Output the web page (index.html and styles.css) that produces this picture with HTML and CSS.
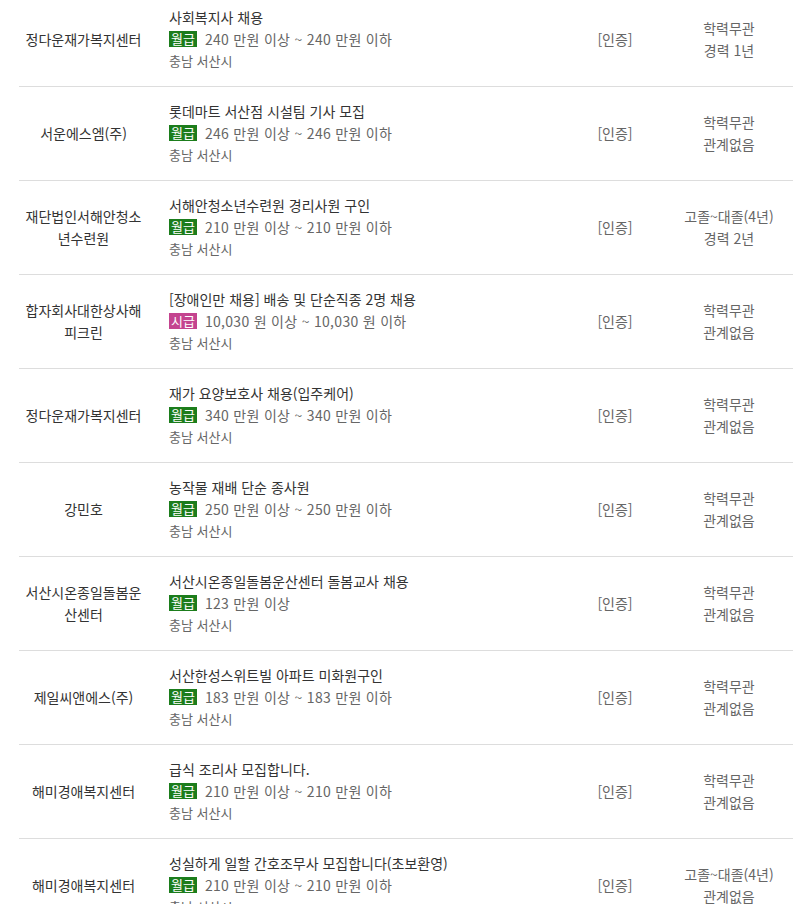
FILE: index.html
```html
<!DOCTYPE html>
<html lang="ko">
<head>
<meta charset="utf-8">
<link rel="stylesheet" href="styles.css">
</head>
<body>
<div class="list">
  <div class="row">
    <div class="company">정다운재가복지센터</div>
    <div class="info">
      <div class="title">사회복지사 채용</div>
      <div class="pay"><span class="badge monthly">월급</span>240 만원 이상 ~ 240 만원 이하</div>
      <div class="loc">충남 서산시</div>
    </div>
    <div class="cert">[인증]</div>
    <div class="req">학력무관<br>경력 1년</div>
  </div>
  <div class="row">
    <div class="company">서운에스엠(주)</div>
    <div class="info">
      <div class="title">롯데마트 서산점 시설팀 기사 모집</div>
      <div class="pay"><span class="badge monthly">월급</span>246 만원 이상 ~ 246 만원 이하</div>
      <div class="loc">충남 서산시</div>
    </div>
    <div class="cert">[인증]</div>
    <div class="req">학력무관<br>관계없음</div>
  </div>
  <div class="row">
    <div class="company">재단법인서해안청소<br>년수련원</div>
    <div class="info">
      <div class="title">서해안청소년수련원 경리사원 구인</div>
      <div class="pay"><span class="badge monthly">월급</span>210 만원 이상 ~ 210 만원 이하</div>
      <div class="loc">충남 서산시</div>
    </div>
    <div class="cert">[인증]</div>
    <div class="req">고졸~대졸(4년)<br>경력 2년</div>
  </div>
  <div class="row">
    <div class="company">합자회사대한상사해<br>피크린</div>
    <div class="info">
      <div class="title">[장애인만 채용] 배송 및 단순직종 2명 채용</div>
      <div class="pay"><span class="badge hourly">시급</span>10,030 원 이상 ~ 10,030 원 이하</div>
      <div class="loc">충남 서산시</div>
    </div>
    <div class="cert">[인증]</div>
    <div class="req">학력무관<br>관계없음</div>
  </div>
  <div class="row">
    <div class="company">정다운재가복지센터</div>
    <div class="info">
      <div class="title">재가 요양보호사 채용(입주케어)</div>
      <div class="pay"><span class="badge monthly">월급</span>340 만원 이상 ~ 340 만원 이하</div>
      <div class="loc">충남 서산시</div>
    </div>
    <div class="cert">[인증]</div>
    <div class="req">학력무관<br>관계없음</div>
  </div>
  <div class="row">
    <div class="company">강민호</div>
    <div class="info">
      <div class="title">농작물 재배 단순 종사원</div>
      <div class="pay"><span class="badge monthly">월급</span>250 만원 이상 ~ 250 만원 이하</div>
      <div class="loc">충남 서산시</div>
    </div>
    <div class="cert">[인증]</div>
    <div class="req">학력무관<br>관계없음</div>
  </div>
  <div class="row">
    <div class="company">서산시온종일돌봄운<br>산센터</div>
    <div class="info">
      <div class="title">서산시온종일돌봄운산센터 돌봄교사 채용</div>
      <div class="pay"><span class="badge monthly">월급</span>123 만원 이상</div>
      <div class="loc">충남 서산시</div>
    </div>
    <div class="cert">[인증]</div>
    <div class="req">학력무관<br>관계없음</div>
  </div>
  <div class="row">
    <div class="company">제일씨앤에스(주)</div>
    <div class="info">
      <div class="title">서산한성스위트빌 아파트 미화원구인</div>
      <div class="pay"><span class="badge monthly">월급</span>183 만원 이상 ~ 183 만원 이하</div>
      <div class="loc">충남 서산시</div>
    </div>
    <div class="cert">[인증]</div>
    <div class="req">학력무관<br>관계없음</div>
  </div>
  <div class="row">
    <div class="company">해미경애복지센터</div>
    <div class="info">
      <div class="title">급식 조리사 모집합니다.</div>
      <div class="pay"><span class="badge monthly">월급</span>210 만원 이상 ~ 210 만원 이하</div>
      <div class="loc">충남 서산시</div>
    </div>
    <div class="cert">[인증]</div>
    <div class="req">학력무관<br>관계없음</div>
  </div>
  <div class="row">
    <div class="company">해미경애복지센터</div>
    <div class="info">
      <div class="title">성실하게 일할 간호조무사 모집합니다(초보환영)</div>
      <div class="pay"><span class="badge monthly">월급</span>210 만원 이상 ~ 210 만원 이하</div>
      <div class="loc">충남 서산시</div>
    </div>
    <div class="cert">[인증]</div>
    <div class="req">고졸~대졸(4년)<br>관계없음</div>
  </div>
</div>
</body>
</html>
```

FILE: styles.css
```css
html, body {
  margin: 0;
  padding: 0;
  background: #fff;
}
body {
  font-family: "Noto Sans CJK KR", "Noto Sans", sans-serif;
  font-size: 14px;
  color: #333;
  overflow: hidden;
}
.list {
  margin: -7px 0 0 19px;
}
.row {
  display: grid;
  grid-template-columns: 129px 1fr 100px 128px;
  box-sizing: border-box;
  height: 94px;
  padding-bottom: 2px;
  border-bottom: 1px solid #dddddd;
  align-items: center;
}
.company {
  text-align: center;
  line-height: 22px;
  color: #333;
}
.info {
  padding-left: 21px;
  line-height: 22px;
}
.title {
  color: #333;
}
.pay {
  color: #666;
  font-size: 14px;
  letter-spacing: 0.3px;
  display: flex;
  align-items: center;
}
.badge {
  display: inline-block;
  color: #fff;
  font-size: 13px;
  letter-spacing: 0;
  line-height: 16px;
  height: 16px;
  padding: 0 2px;
  margin-right: 8px;
}
.monthly {
  background: #1c7d1c;
}
.hourly {
  background: #c4448f;
}
.loc {
  color: #666;
  font-size: 13px;
}
.cert {
  text-align: center;
  color: #666;
}
.req {
  text-align: center;
  color: #666;
  line-height: 22px;
}
```
